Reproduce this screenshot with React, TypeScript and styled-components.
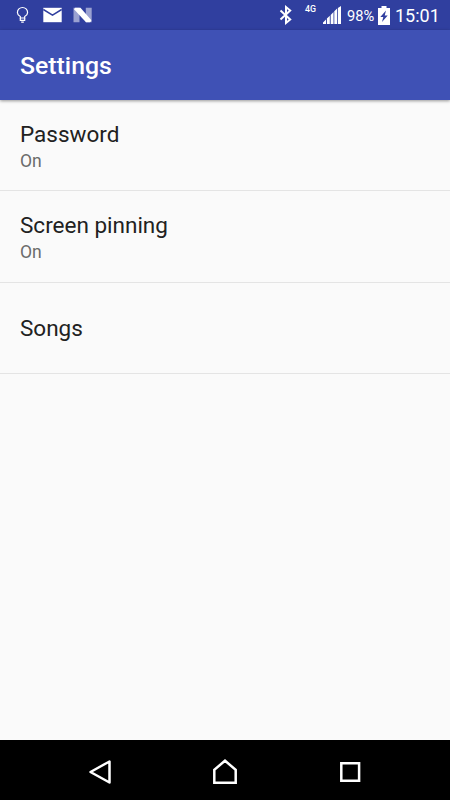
import React from "react";
import styled, { createGlobalStyle } from "styled-components";

const GlobalStyle = createGlobalStyle`
  * { box-sizing: border-box; }
  body { margin: 0; background: #fafafa; font-family: Roboto, sans-serif; }
`;

const Screen = styled.div`
  width: 450px;
  height: 800px;
  display: flex;
  flex-direction: column;
  background: #fafafa;
  overflow: hidden;
`;

const StatusBar = styled.div`
  height: 30px;
  flex: none;
  display: flex;
  align-items: center;
  justify-content: space-between;
  padding: 0 10px 0 16px;
  background: #303f9f;
  color: #fff;
`;

const Notifications = styled.div`
  display: flex;
  align-items: center;
`;

const Indicators = styled.div`
  display: flex;
  align-items: center;
`;

const Icon = styled.svg<{ $right?: number }>`
  display: block;
  flex: none;
  margin-right: ${(p) => p.$right ?? 0}px;
`;

const Network = styled.span`
  width: 18px;
  padding-bottom: 12px;
  font-size: 8.8px;
  line-height: 10px;
  font-weight: 500;
`;

const BatteryLevel = styled.span`
  width: 31px;
  padding-top: 2px;
  font-size: 14.7px;
  line-height: 20px;
`;

const Clock = styled.span`
  width: 45px;
  padding-top: 1px;
  font-size: 18px;
  line-height: 22px;
  white-space: nowrap;
`;

const AppBar = styled.header`
  height: 70px;
  flex: none;
  display: flex;
  align-items: center;
  padding: 2px 20px 0;
  background: #3f51b5;
  box-shadow: 0 1px 3px rgba(0, 0, 0, 0.4);
`;

const Title = styled.h1`
  margin: 0;
  color: #fff;
  font-size: 24.8px;
  line-height: 30px;
  font-weight: 500;
`;

const List = styled.main`
  flex: 1;
`;

const Row = styled.div<{ $double: boolean }>`
  height: 91.3px;
  display: flex;
  flex-direction: column;
  justify-content: center;
  padding: ${(p) => (p.$double ? 3 : 0)}px 20px 0;
  border-bottom: 1px solid #e4e4e4;
`;

const Label = styled.div`
  color: #212121;
  font-size: 22.5px;
  line-height: 28px;
`;

const Value = styled.div`
  margin-top: 1px;
  color: #6b6b6b;
  font-size: 17.5px;
  line-height: 24px;
`;

const NavBar = styled.nav`
  height: 60px;
  flex: none;
  display: flex;
  align-items: center;
  justify-content: center;
  gap: 97px;
  padding-top: 4px;
  background: #000;
`;

const NavButton = styled.button`
  display: flex;
  padding: 0;
  border: 0;
  background: none;
  color: #fff;
`;

const items = [
  { label: "Password", value: "On" },
  { label: "Screen pinning", value: "On" },
  { label: "Songs" },
];

export default function App() {
  return (
    <Screen>
      <GlobalStyle />
      <StatusBar>
        <Notifications>
          <Icon $right={14} width="13" height="18" viewBox="0 0 13 18" fill="none" stroke="#fff" strokeWidth="1.2">
            <path d="M4.3 12V10.6C2.6 9.6 1.4 8.2 1.4 6.4a5.1 4.9 0 0 1 10.2 0c0 1.8-1.2 3.2-2.9 4.2V12z" />
            <path d="M4.3 12v2.3h4.4V12M5.2 16.2h2.6" />
          </Icon>
          <Icon $right={11} width="19" height="16" viewBox="0 0 19 16">
            <path d="M.3.8h18.4v14.400H.3z" fill="#fff" />
            <path d="M.3 2.500l9.200 5.600 9.200-5.600" fill="none" stroke="#303f9f" strokeWidth="1.500" />
          </Icon>
          <Icon width="20" height="16" viewBox="0 0 20 16">
            <path d="M.5.8H6.500v14.400H.5zM12.800.8h5.900v14.400h-5.900z" fill="#9aa1d1" />
            <path d="M1 2.200L2.200.8h5.300L18.200 13v1l-1.200 1.200h-4z" fill="#fff" />
          </Icon>
        </Notifications>
        <Indicators>
          <Icon $right={12} width="14" height="20" viewBox="0 0 14 20" fill="none" stroke="#fff" strokeWidth="2">
            <path d="M1.500 5.400l9.700 9-4.200 3.500V2.100l4.200 3.500-9.700 9" />
          </Icon>
          <Network>4G</Network>
          <Icon $right={6} width="18" height="18" viewBox="0 0 18 18" fill="#fff">
            <path d="M0 18v-1.500l3-3V18zM3.900 18v-5.400L6.800 9.800V18zM7.700 18V8.900l2.800-2.800V18zM11.300 18V5.300l2.800-2.700V18zM14.900 18V2L18 0v18z" />
          </Icon>
          <BatteryLevel>98%</BatteryLevel>
          <Icon $right={5} width="12" height="19" viewBox="0 0 12 19">
            <path d="M3.500 0h5v2H12v17H0V2h3.500z" fill="#fff" />
            <path d="M8 4.500L2.300 11h3L4 16l5.700-6.500h-3z" fill="#303f9f" />
          </Icon>
          <Clock>15:01</Clock>
        </Indicators>
      </StatusBar>
      <AppBar>
        <Title>Settings</Title>
      </AppBar>
      <List>
        {items.map((item) => (
          <Row key={item.label} $double={Boolean(item.value)}>
            <Label>{item.label}</Label>
            {item.value && <Value>{item.value}</Value>}
          </Row>
        ))}
      </List>
      <NavBar>
        <NavButton aria-label="Back">
          <Icon width="28" height="28" viewBox="0 0 28 28" fill="none" stroke="currentColor" strokeWidth="2.5" strokeLinejoin="round">
            <path d="M4.500 14L23.500 3.500v21z" />
          </Icon>
        </NavButton>
        <NavButton aria-label="Home">
          <Icon width="28" height="28" viewBox="0 0 28 28" fill="none" stroke="currentColor" strokeWidth="2.5">
            <path d="M3.300 24.700V11.800L14 2.700l10.700 9.100v12.900z" />
          </Icon>
        </NavButton>
        <NavButton aria-label="Overview">
          <Icon width="28" height="28" viewBox="0 0 28 28" fill="none" stroke="currentColor" strokeWidth="2.5">
            <path d="M5.300 5.300h17.800v17.500H5.300z" />
          </Icon>
        </NavButton>
      </NavBar>
    </Screen>
  );
}
